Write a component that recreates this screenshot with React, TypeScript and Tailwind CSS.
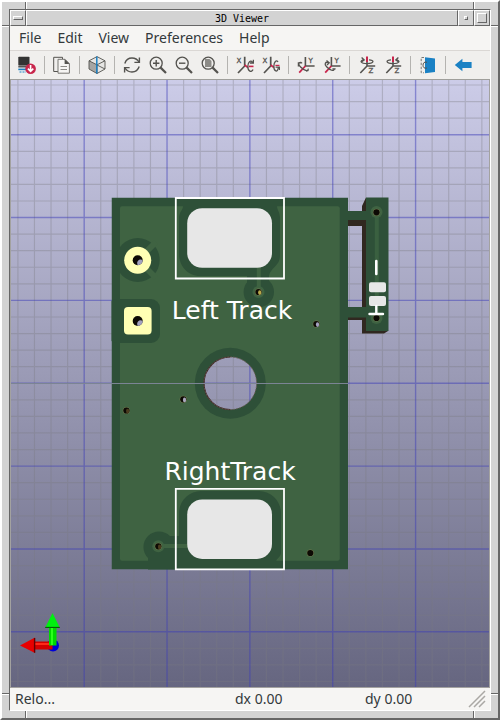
import React from 'react';

const INK = '#54534f';
const RED = '#c8264c';
const BLUE = '#1a81c4';

function Icon({ children }: { children: React.ReactNode }) {
  return (
    <svg viewBox="0 0 18 18" className="size-[18px]" fill="none" aria-hidden="true">
      {children}
    </svg>
  );
}

function Lens({ children }: { children: React.ReactNode }) {
  return (
    <Icon>
      <circle cx="7.2" cy="7.2" r="6" stroke={INK} strokeWidth="1.3" />
      <path d="M11.6 11.6L17 17" stroke={INK} strokeWidth="2.2" />
      {children}
    </Icon>
  );
}

function AxisLabel({ x, y, children }: { x: number; y: number; children: string }) {
  return (
    <text x={x} y={y} fontSize="7" fontFamily="DejaVu Sans, sans-serif" fill={INK} stroke={INK} strokeWidth="0.3">
      {children}
    </text>
  );
}

function RotateX({ flip }: { flip?: boolean }) {
  return (
    <Icon>
      <path d="M8.7 0.8V10L2 17" stroke={INK} strokeWidth="1.7" />
      <path d="M8.7 9L12 11.6" stroke={RED} strokeWidth="1.8" />
      <AxisLabel x={0.5} y={6.8}>X</AxisLabel>
      {flip ? (
        <>
          <path d="M16.5 6.5C14.8 3.4 11.8 6 11.8 10.4C12 15.6 15.4 17 17 13.4M17.4 3.8V7H14" stroke={INK} strokeWidth="1.3" />
          <path d="M12.8 10.4H17.5" stroke={RED} strokeWidth="1.6" />
        </>
      ) : (
        <>
          <path d="M16 6C14.6 3.4 11.8 6 11.8 10.4C12 15.6 15.6 17 16.4 11.6M17.6 14V11.2H13.6" stroke={INK} strokeWidth="1.3" />
          <path d="M13.4 9.4H17.5" stroke={RED} strokeWidth="1.2" />
        </>
      )}
    </Icon>
  );
}

function RotateY({ flip }: { flip?: boolean }) {
  return (
    <Icon>
      <path d="M8.4 1V10H17.6" stroke={INK} strokeWidth="1.6" />
      <path d="M8.4 10L2.2 16.7" stroke={RED} strokeWidth="1.8" />
      <AxisLabel x={11.5} y={6.7}>Y</AxisLabel>
      {flip ? (
        <path d="M6 6.6C2 5.4 1 8 3.6 10.8C6.8 14.2 11.4 16 11.4 12.6M3.5 4.5L6.2 6.8L4 9M9.4 12.8H12.6" stroke={INK} strokeWidth="1.3" />
      ) : (
        <path d="M4.6 6.6C1 6 1 8.4 3.6 11C6.8 14.2 11.6 16.2 11.2 12.6M1.4 10.5V6.8H5.2M9 15L11.6 14.4" stroke={INK} strokeWidth="1.3" />
      )}
    </Icon>
  );
}

function RotateZ({ flip }: { flip?: boolean }) {
  return (
    <Icon>
      <path d="M9 5V10L2.3 17M9 10H17.2" stroke={INK} strokeWidth="1.6" />
      <path d="M9 0.5V6" stroke={RED} strokeWidth="2" />
      <AxisLabel x={10.4} y={17.3}>Z</AxisLabel>
      {flip ? (
        <path d="M7 3.8C1.5 4 1.5 7.4 8.6 7.6C16 7.6 16.6 4.6 12 4M14.4 1.6L11.8 4L14.6 6" stroke={INK} strokeWidth="1.3" />
      ) : (
        <path d="M11 3.8C16.5 4 16.5 7.4 9.4 7.6C2 7.6 1.4 4.6 6 4M3.6 1.6L6.2 4L3.4 6" stroke={INK} strokeWidth="1.3" />
      )}
    </Icon>
  );
}

const reloadIcon = (
  <Icon>
    <rect x="0.3" y="0.8" width="11.2" height="8.8" rx="0.8" fill="#333" />
    <path d="M0.3 10.6H10" stroke="#555" strokeWidth="1.8" />
    <path d="M0.3 13.4H9" stroke={BLUE} strokeWidth="1.6" />
    <path d="M1.5 16H8" stroke={BLUE} strokeWidth="1" strokeDasharray="2 1" />
    <circle cx="12.6" cy="12.7" r="5.3" fill={RED} />
    <path d="M12.6 9V15M9.9 12.6L12.6 15.4L15.3 12.6" stroke="#fff" strokeWidth="1.6" />
  </Icon>
);

const copyIcon = (
  <Icon>
    <path d="M5 15.5H0.7V1.3H9.5V3" stroke={INK} strokeWidth="1" />
    <path d="M5 3.3H12L16.4 7.7V17.2H5Z" fill="#f6f5f3" stroke="#777672" strokeWidth="1" />
    <path d="M11.6 3V8H16.6Z" fill={INK} />
    <path d="M7.5 10.5H14M7.5 13.5H14" stroke="#8c8b87" strokeWidth="1" />
  </Icon>
);

const cubeIcon = (
  <Icon>
    <path d="M9 0.6L17 4.8V13L9 17.5L1 13V4.8Z" fill="#e6e6e4" />
    <path d="M1 4.8L9 8.8V17.5L1 13Z" fill="#a6a6a4" />
    <path d="M9 0.6L17 4.8V13L9 17.5L1 13V4.8ZM1 4.8L9 8.8L17 4.8M9 8.8V17.5M9 9L17 13" stroke={INK} strokeWidth="0.9" />
    <path d="M8.8 0.5V17.5" stroke={BLUE} strokeWidth="1.5" />
  </Icon>
);

const refreshIcon = (
  <Icon>
    <path d="M1.8 7.5C3 3.8 6 2 9 2C12 2 14.5 3.5 16 6M16.2 10.5C15 14.2 12 16 9 16C6 16 3.5 14.5 2 12" stroke={INK} strokeWidth="1.4" />
    <path d="M16.4 1.4V6.4H11.4M1.6 16.6V11.6H6.6" stroke={INK} strokeWidth="1.4" />
  </Icon>
);

const orthoIcon = (
  <Icon>
    <path d="M6 1.2L16 2.6V16L6 17.2Z" fill={BLUE} />
    <path d="M5 1.5H2.2V16.8H5" stroke="#777672" strokeWidth="1" strokeDasharray="2.5 1.5" />
    <path d="M8 6.3C5 5.3 4 7.5 4 9.2C4 11.5 5.4 12.8 8 12" stroke={INK} strokeWidth="1" />
  </Icon>
);

const flipIcon = (
  <Icon>
    <path d="M0.8 9L8.4 2.7V6H17.6V12H8.4V15.3Z" fill={BLUE} />
  </Icon>
);

const toolGroups: { label: string; icon: React.ReactNode }[][] = [
  [{ label: 'Reload board', icon: reloadIcon }],
  [{ label: 'Copy image', icon: copyIcon }],
  [{ label: 'Render with raytracing', icon: cubeIcon }],
  [
    { label: 'Redraw', icon: refreshIcon },
    { label: 'Zoom in', icon: <Lens><path d="M7.2 4V10.4M4 7.2H10.4" stroke={INK} strokeWidth="1.4" /></Lens> },
    { label: 'Zoom out', icon: <Lens><path d="M4 7.2H10.4" stroke={INK} strokeWidth="1.4" /></Lens> },
    { label: 'Zoom to fit', icon: <Lens><path d="M4 3H8.5L10.5 5V11H4Z" fill="#8c8b87" /></Lens> },
  ],
  [
    { label: 'Rotate X clockwise', icon: <RotateX flip /> },
    { label: 'Rotate X counterclockwise', icon: <RotateX /> },
  ],
  [
    { label: 'Rotate Y clockwise', icon: <RotateY /> },
    { label: 'Rotate Y counterclockwise', icon: <RotateY flip /> },
  ],
  [
    { label: 'Rotate Z clockwise', icon: <RotateZ /> },
    { label: 'Rotate Z counterclockwise', icon: <RotateZ flip /> },
  ],
  [{ label: 'Orthographic projection', icon: orthoIcon }],
  [{ label: 'Flip board', icon: flipIcon }],
];

const STEP = 16.57;
const vertical = Array.from({ length: 29 }, (_, i) => ({ at: 17.9 + i * STEP, major: i % 5 === 4 }));
const horizontal = Array.from({ length: 37 }, (_, i) => ({ at: 85 + i * STEP, major: i % 5 === 3 }));

const MASK = '#2e5038';
const COPPER = '#3f6342';
const PAD = '#e7e7e7';

function Via({ x, y, glint }: { x: number; y: number; glint?: string }) {
  return (
    <g>
      <circle cx={x} cy={y} r="3.6" fill="#6f7a4e" />
      <circle cx={x} cy={y} r="3.1" fill="#0d0a04" />
      {glint && <ellipse cx={x + 1.2} cy={y + 0.6} rx="1.6" ry="2.3" fill={glint} />}
    </g>
  );
}

function Drill({ x, y }: { x: number; y: number }) {
  return (
    <g>
      <circle cx={x} cy={y} r="5" fill="#0d0a04" />
      <path d={`M${x + 5} ${y}A5 5 0 0 1 ${x} ${y + 5}C${x - 2} ${y + 1} ${x + 2} ${y - 2} ${x + 5} ${y}Z`} fill="#a3a2c0" />
    </g>
  );
}

function BoardView() {
  return (
    <svg
      viewBox="11 80 478 607"
      preserveAspectRatio="xMidYMid slice"
      className="block min-h-0 w-full flex-1"
      role="img"
      aria-label="Circuit board"
    >
      <defs>
        <linearGradient id="sky" x1="0" y1="0" x2="0" y2="1">
          <stop offset="0" stopColor="#cccce8" />
          <stop offset="1" stopColor="#666680" />
        </linearGradient>
        <mask id="bore">
          <rect x="0" y="80" width="500" height="607" fill="#fff" />
          <circle cx="230.3" cy="383.3" r="26.3" fill="#000" />
        </mask>
        <clipPath id="outline">
          <rect x="111.5" y="197.5" width="236.5" height="372" />
        </clipPath>
      </defs>
      <rect x="11" y="80" width="478" height="607" fill="url(#sky)" />
      {[false, true].map((major) => (
        <g key={String(major)} stroke={major ? '#3c3cb8' : '#7a7a80'} strokeWidth={major ? 1.4 : 1.2} opacity={major ? 0.48 : 0.34}>
          {vertical.filter((l) => l.major === major).map((l) => (
            <path key={l.at} d={`M${l.at} 80V687`} />
          ))}
          {horizontal.filter((l) => l.major === major).map((l) => (
            <path key={l.at} d={`M11 ${l.at}H489`} />
          ))}
        </g>
      ))}

      <path d="M348 220H362V206L366 197.5V331H386L388 331L384 333.5H362V320H348V315H362V226H348Z" fill="#302820" />
      <rect x="366" y="197.5" width="22.5" height="133.5" fill={MASK} />
      <path d="M347 211H367V220H347ZM347 307H367V317.5H347Z" fill={MASK} />
      <path d="M376.8 212V318" stroke="#3a6040" strokeWidth="4" />
      <circle cx="376.5" cy="212" r="6" fill={COPPER} />
      <circle cx="376.5" cy="318" r="6" fill={COPPER} />
      <Via x={376.5} y={212.3} />
      <Via x={376.5} y={318} />
      <path d="M376.3 261V274" stroke="#fff" strokeWidth="2.6" strokeLinecap="round" />
      <rect x="369" y="282.3" width="17" height="10" rx="2" fill={PAD} />
      <rect x="369" y="296" width="17" height="10" rx="2" fill={PAD} />
      <path d="M376.3 306V314M369.5 314H383" stroke="#fff" strokeWidth="2.4" strokeLinecap="round" />

      <g mask="url(#bore)">
        <g clipPath="url(#outline)">
          <rect x="111.5" y="197.5" width="236.5" height="372" fill={MASK} />
          <rect x="120" y="206.3" width="219.7" height="354.5" rx="2" fill={COPPER} />
          <path d="M183 198H277V206C277 210 280 212 280 218V256C280 266 270 268 269 276V284H247V276H200C188 276 179 266 179 254V218C179 212 183 210 183 206Z" fill={MASK} />
          <circle cx="258.8" cy="292" r="15.2" fill={MASK} />
          <path d="M258.8 266V290" stroke={COPPER} strokeWidth="4" />
          <circle cx="258.5" cy="292" r="6" fill={COPPER} />

          <path d="M201 491H259C271 491 281 501 281 513V552C281 558 276 558 276 562V570H148V558A15.5 15.5 0 1 1 170 536H179V513C179 501 189 491 201 491Z" fill={MASK} />
          <path d="M158 546H190" stroke={COPPER} strokeWidth="4" />
          <circle cx="158.3" cy="546.3" r="6" fill={COPPER} />

          <circle cx="137.7" cy="260" r="22" fill={MASK} />
          <path d="M138 260L156 242M138 260L156 278" stroke={COPPER} strokeWidth="6" />
          <rect x="108" y="299" width="52" height="44" rx="9" fill={MASK} />
          <circle cx="230.3" cy="383.3" r="35.5" fill={MASK} />
        </g>
      </g>
      <path d="M230.3 357A26.3 26.3 0 0 0 230.3 409.6" fill="none" stroke="#3b2823" strokeWidth="1.2" />
      <circle cx="230.3" cy="383.3" r="26.3" fill="none" stroke="#735e5c" strokeWidth="0.8" strokeDasharray="2 1" />

      <circle cx="137.7" cy="260.3" r="13.5" fill="#ffffb4" />
      <rect x="124" y="307" width="27.6" height="27.6" rx="4" fill="#ffffb4" />
      <Drill x={137.7} y={260.2} />
      <Drill x={137.7} y={321} />

      <rect x="187.2" y="208.2" width="84.8" height="59.6" rx="15" fill={PAD} />
      <rect x="187.2" y="499.4" width="84.8" height="59.6" rx="15" fill={PAD} />
      <path d="M175.8 198H284V278.5H175.8ZM175.8 488.8H284V569.3H175.8Z" fill="none" stroke="#fff" strokeWidth="1.8" />

      <Via x={258.5} y={292} glint="#b8a84a" />
      <Via x={158.3} y={546.3} glint="#4b3c1e" />
      <Via x={126.4} y={410.5} glint="#4b3c1e" />
      <Via x={183.3} y={399.3} glint="#a9a8bd" />
      <Via x={316.3} y={324} glint="#a3a2c0" />
      <Via x={310.3} y={553} />

      <g fill="#fff" fontFamily="DejaVu Sans, sans-serif" fontSize="25" textAnchor="middle">
        <text x="232" y="319">Left Track</text>
        <text x="230" y="480">RightTrack</text>
      </g>
      <path d="M11 383.5H348" stroke="#7b8494" strokeWidth="1" />

      <circle cx="53" cy="645.5" r="6" fill="#0000d8" />
      <rect x="34" y="641.5" width="18.5" height="8" fill="#d40000" />
      <path d="M34 644H52" stroke="#ff2a1a" strokeWidth="2" />
      <path d="M20 645.5L35 637.5V653Z" fill="#e80000" />
      <path d="M34.6 638V652.7" stroke="#600" strokeWidth="1.4" />
      <rect x="49" y="626" width="7.5" height="19.5" fill="#00d800" />
      <path d="M52 627V645" stroke="#2bff1a" strokeWidth="2" />
      <path d="M52.5 613L45 628H60Z" fill="#00f010" />
      <path d="M45.2 627.4H59.8" stroke="#064d06" strokeWidth="1" />
    </svg>
  );
}

const raised = 'border border-t-white border-l-white border-r-[#666666] border-b-[#666666]';

function EdgeRow() {
  return (
    <div className="flex h-[7px] shrink-0">
      <div className="w-6 border-r border-[#666666]" />
      <div className="flex-1 border-x border-l-white border-r-[#666666]" />
      <div className="w-6 border-l border-white" />
    </div>
  );
}

function EdgeColumn() {
  return (
    <div className="flex w-[7px] shrink-0 flex-col">
      <div className="h-[17px] border-b border-[#666666]" />
      <div className="flex-1 border-y border-t-white border-b-[#666666]" />
      <div className="h-[17px] border-t border-white" />
    </div>
  );
}

export default function App() {
  return (
    <div className="flex h-screen flex-col border-2 border-t-white border-r-[#666666] border-b-[#666666] border-l-white bg-[#d3d3d3] font-['Noto_Sans',sans-serif] text-sm text-[#33393b]">
      <EdgeRow />
      <div className="flex min-h-0 flex-1">
        <EdgeColumn />
        <main className="flex min-w-0 flex-1 flex-col border border-t-[#666666] border-r-white border-b-white border-l-[#666666]">
          <header className="flex h-4 shrink-0">
            <button aria-label="Window menu" className={`flex w-4 items-center justify-center ${raised}`}>
              <span className={`h-1 w-2.5 ${raised}`} />
            </button>
            <h1 className={`flex-1 text-center font-['DejaVu_Sans_Mono',monospace] text-[10px] leading-[15px] text-black ${raised}`}>
              3D Viewer
            </h1>
            <button aria-label="Minimize" className={`flex w-4 items-center justify-center ${raised}`}>
              <span className={`size-1 ${raised}`} />
            </button>
            <button aria-label="Maximize" className={`flex w-4 items-center justify-center ${raised}`}>
              <span className={`size-2.5 ${raised}`} />
            </button>
          </header>

          <nav className="flex h-[25px] shrink-0 items-center border-b border-[#dad7d4] bg-[#f6f5f3] pl-px">
            {['File', 'Edit', 'View', 'Preferences', 'Help'].map((item) => (
              <button key={item} className="px-2 leading-6">
                {item}
              </button>
            ))}
          </nav>

          <div role="toolbar" className="flex h-[29px] shrink-0 items-center border-b border-[#9f9f9b] bg-[#f0efed] pl-1">
            {toolGroups.map((group, i) => (
              <React.Fragment key={group[0].label}>
                {i > 0 && <span className="mx-1 h-[18px] w-px bg-[#b4b3b0]" />}
                {group.map((tool) => (
                  <button key={tool.label} aria-label={tool.label} className="flex h-7 w-[26px] items-center justify-center">
                    {tool.icon}
                  </button>
                ))}
              </React.Fragment>
            ))}
          </div>

          <div className="flex min-h-0 flex-1 flex-col border-x border-b border-[#a3a2a0]">
            <BoardView />
          </div>

          <footer className="flex h-[22px] shrink-0 items-center bg-[#f6f5f3] pr-1 pl-[5px] leading-[22px]">
            <span className="flex-1">Relo...</span>
            <span className="w-[130px]">dx 0.00</span>
            <span className="w-[103px]">dy 0.00</span>
            <svg viewBox="0 0 18 18" className="size-[18px]" aria-hidden="true">
              <path d="M1 17L17 1M6 17L17 6M11 17L17 11" stroke="#aaa8a4" strokeWidth="1.5" />
            </svg>
          </footer>
        </main>
        <EdgeColumn />
      </div>
      <EdgeRow />
    </div>
  );
}
